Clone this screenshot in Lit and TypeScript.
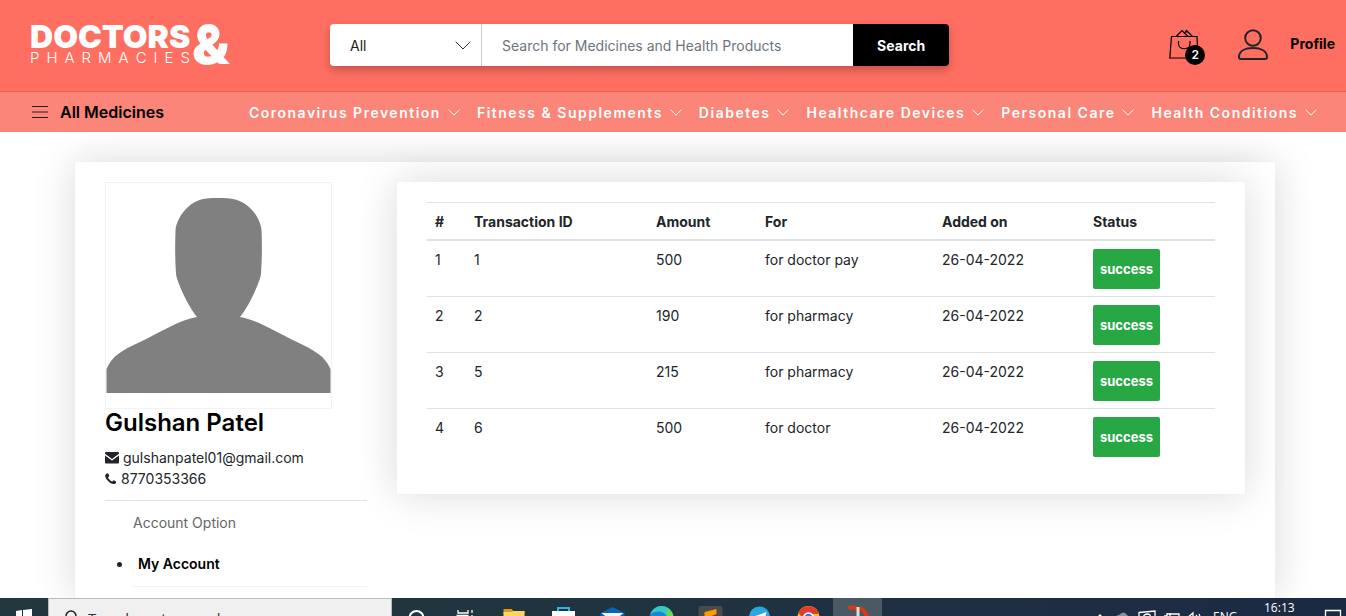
import { LitElement, html, css, svg } from "lit";
import { customElement } from "lit/decorators.js";

const chevron = html`<svg class="chevron" viewBox="0 0 16 9" fill="none" stroke="currentColor" aria-hidden="true"><path d="M.7.7 8 8 15.300.7" /></svg>`;

@customElement("site-header")
class SiteHeader extends LitElement {
  static styles = css`
    :host { display: block; position: relative; z-index: 1; color: #000; }
    a { color: inherit; text-decoration: none; }
    .top { display: flex; align-items: center; height: 90px; padding: 0 11px 1px 30px; background: #ff6f61; border-bottom: 1px solid #e46257; }
    .logo { display: flex; align-items: center; width: 300px; flex: none; color: #fff; font-family: Inter, sans-serif; }
    .words { display: flex; flex-direction: column; width: 162px; }
    .doctors { font-size: 32px; line-height: 26px; font-weight: 900; }
    .pharmacies { display: flex; justify-content: space-between; width: 160px; font-size: 15px; line-height: 16px; font-weight: 300; }
    .amp { font-size: 54px; line-height: 42px; font-weight: 900; }
    .search { display: flex; flex: none; width: 46vw; height: 42px; border-radius: 4px; overflow: hidden; box-shadow: 0 4px 8px rgba(0, 0, 0, .25); }
    .pick { display: flex; align-items: center; width: 151px; background: #fff; border-right: 1px solid #ccc; }
    .pick select { appearance: none; width: 100%; height: 100%; margin-right: -36px; padding: 0 36px 0 20px; border: 0; background: none; font: 14px Inter, sans-serif; color: #222; }
    .pick .chevron { width: 16px; height: 9px; flex: none; margin: 0 10px; color: #333; pointer-events: none; }
    .search input { flex: 1; min-width: 0; border: 0; padding: 0 20px; font: 14px Inter, sans-serif; color: #222; outline: none; }
    .search input::placeholder { color: #6c757d; }
    .search button { width: 96px; border: 0; background: #000; color: #fff; font: 700 14px Inter, sans-serif; }
    .tools { display: flex; align-items: center; margin-left: auto; }
    .cart { position: relative; width: 36px; height: 36px; margin: 3px 33px 0 0; }
    .cart svg { display: block; }
    .count { position: absolute; right: 0; bottom: 0; width: 20px; height: 20px; border-radius: 50%; background: #000; color: #fff; font-size: 12px; line-height: 20px; font-weight: 600; text-align: center; }
    .user { display: block; margin-right: 22px; }
    .user svg { display: block; }
    .profile { font-size: 14px; font-weight: 700; margin-bottom: 4px; }
    .menu { display: flex; align-items: center; height: 40px; padding: 0 29px 0 32px; background: #fa8578; }
    .all { display: flex; align-items: center; gap: 12px; border: 0; padding: 0; background: none; font: 600 16px Inter, sans-serif; color: #000; white-space: nowrap; }
    nav { display: flex; gap: 17px; margin-left: auto; color: #fff; font-size: 14px; font-weight: 600; letter-spacing: 1.5px; white-space: nowrap; }
    nav a { display: flex; align-items: center; gap: 7px; }
    nav .chevron { width: 12px; height: 7px; stroke-width: 1.300; }
  `;
  render() {
    const items = ["Coronavirus Prevention", "Fitness & Supplements", "Diabetes", "Healthcare Devices", "Personal Care", "Health Conditions"];
    return html`
      <div class="top">
        <a class="logo" href="#">
          <span class="words"><span class="doctors">DOCTORS</span>
            <span class="pharmacies">${[..."PHARMACIES"].map((c) => html`<span>${c}</span>`)}</span></span>
          <span class="amp">&amp;</span>
        </a>
        <form class="search" @submit=${(e: Event) => e.preventDefault()}>
          <div class="pick"><select aria-label="Category"><option>All</option></select>${chevron}</div>
          <input type="text" aria-label="Search" placeholder="Search for Medicines and Health Products" />
          <button>Search</button>
        </form>
        <div class="tools">
          <a class="cart" href="#" aria-label="Cart">
            <svg width="30" height="32" viewBox="0 0 30 32" fill="none" stroke="#000" stroke-width="1.2"><path d="M2.500 7.500h25.500l1 21.500H.8zM7 7.500l6-6 6 6M15.500 4l2-2.500 6 6M16 2.800h3M9.500 12v2.500c0 7 11.500 7 11.500 0V12" /></svg>
            <span class="count">2</span>
          </a>
          <a class="user" href="#" aria-label="Account">
            <svg width="30" height="32" viewBox="0 0 30 32" fill="none" stroke="#212529" stroke-width="2"><circle cx="15" cy="9" r="7.800" /><path d="M1 28c0-6 6-9 14-9s14 3 14 9c0 1.500-.5 2-2 2H3c-1.500 0-2-.5-2-2z" /></svg>
          </a>
          <a class="profile" href="#">Profile</a>
        </div>
      </div>
      <div class="menu">
        <button class="all"><svg width="16" height="12" viewBox="0 0 16 12" stroke="#222"><path d="M0 .5h16M0 6h16M0 11.500h16" /></svg>All Medicines</button>
        <nav>${items.map((t) => html`<a href="#">${t}${chevron}</a>`)}</nav>
      </div>`;
  }
}

@customElement("profile-panel")
class ProfilePanel extends LitElement {
  static styles = css`
    :host { display: block; font-size: 14px; line-height: 21px; }
    .photo { display: block; width: 225px; height: 225px; border: 1px solid #f2f2f2; }
    h1 { margin: 0 0 10px; font-size: 24px; line-height: 28px; font-weight: 600; color: #000; }
    .line { display: flex; align-items: center; gap: 4px; }
    .rule { height: 1px; margin: 11px 0; background: #e2e2e2; }
    .title { margin: 0 0 20px 28px; color: #666; }
    ul { margin: 0 0 0 28px; padding: 0; }
    li { padding: 0 0 12px 5px; border-bottom: 1px solid #f2f2f2; }
    li a { color: #000; font-weight: 600; text-decoration: none; }
  `;
  render() {
    return html`
      <svg class="photo" viewBox="0 0 225 225" role="img" aria-label="Profile photo"><path fill="#808080" d="M112 15C126 15 134 16 143 24C151 31 155 41 155.500 47C156.200 62 156 77 155 91C154 99 143 123 134 134C152 137 170 149 191 159C208 167 219 173 224.500 186V210H.5V186C6 173 16 167 34 159C55 149 73 137 91 134C82 123 71 99 70 91C69 77 69 62 69.500 47C70 41 74 31 82 24C91 16 98 15 112 15Z" /></svg>
      <h1>Gulshan Patel</h1>
      <div class="line"><svg width="14" height="12" viewBox="0 0 14 12" fill="#212529"><path d="M1 0h12q1 0 1 1v.8L7 7 0 1.800V1Q0 0 1 0zM0 3.500 7 8.600l7-5.100V10.500q0 1-1 1H1q-1 0-1-1z" /></svg>gulshanpatel01@gmail.com</div>
      <div class="line"><svg width="12" height="12" viewBox="0 0 12 12" fill="#212529"><path d="M2.800.2c.5 0 1.500 2.300 1.500 2.800 0 .7-1.300 1-1.300 1.600C3 5.300 6 8.600 7.100 8.600c.6 0 1-1.300 1.600-1.300.5 0 2.500 1.200 2.500 1.600 0 1.100-.9 2.200-2.400 2.200C5 11.100.2 6 .2 2.800.2 1.200 1.700.2 2.800.2z" /></svg>8770353366</div>
      <div class="rule"></div>
      <p class="title">Account Option</p>
      <ul><li><a href="#">My Account</a></li></ul>`;
  }
}

@customElement("transaction-table")
class TransactionTable extends LitElement {
  static styles = css`
    :host { display: block; padding: 20px 30px 30px; background: #fff; box-shadow: 0 0 40px rgba(0, 0, 0, .15); font-size: 14px; line-height: 21px; }
    table { width: 100%; table-layout: fixed; border-collapse: separate; border-spacing: 0; }
    th { padding: 8px 8px 7px; text-align: left; font-size: 14px; font-weight: 700; border-top: 1px solid #dee2e6; border-bottom: 2px solid #dee2e6; }
    td { padding: 8px 8px 7px; vertical-align: top; border-top: 1px solid #dee2e6; }
    tbody tr:first-child td { border-top: 0; }
    .c1 { width: 39px; } .c2 { width: 182px; } .c3 { width: 109px; } .c4 { width: 177px; } .c5 { width: 151px; } .c6 { width: 130px; }
    .badge { display: block; width: 67px; border-radius: 2px; background: #28a745; color: #fff; font-size: 13px; line-height: 40px; font-weight: 700; text-align: center; }
  `;
  rows = [
    ["1", "1", "500", "for doctor pay"],
    ["2", "2", "190", "for pharmacy"],
    ["3", "5", "215", "for pharmacy"],
    ["4", "6", "500", "for doctor"],
  ];
  render() {
    return html`<table>
      <colgroup><col class="c1" /><col class="c2" /><col class="c3" /><col class="c4" /><col class="c5" /><col class="c6" /></colgroup>
      <thead><tr>${["#", "Transaction ID", "Amount", "For", "Added on", "Status"].map((h) => html`<th scope="col">${h}</th>`)}</tr></thead>
      <tbody>${this.rows.map((r) => html`<tr>${r.map((c) => html`<td>${c}</td>`)}<td>26-04-2022</td><td><span class="badge">success</span></td></tr>`)}</tbody>
    </table>`;
  }
}

@customElement("task-bar")
class TaskBar extends LitElement {
  static styles = css`
    :host { display: flex; align-items: flex-start; height: 18px; overflow: hidden; background: linear-gradient(90deg, #21383f, #20343f 45%, #1b2a44); color: #fff; font: 12px/16px "Open Sans", sans-serif; }
    svg { display: block; flex: none; }
    .find { display: flex; width: 342px; height: 40px; border: 1px solid #bbb; background: #f0f0f0; color: #333; }
    .find svg { margin: 10px 11px 0 15px; }
    .find input { flex: 1; min-width: 0; height: 38px; padding: 0; border: 0; background: none; font: 15px "Open Sans", sans-serif; outline: none; }
    .find input::placeholder { color: #333; }
    .active { background: #4a5963; }
    .tray { display: flex; align-items: flex-start; margin-left: auto; }
    .lang { padding: 11px 0 0 10px; width: 51px; }
    .clock { padding: 2px 0 0; width: 60px; }
  `;
  render() {
    const icons = [
      svg`<circle cx="24" cy="20" r="7" fill="none" stroke="#fff" stroke-width="2" />`,
      svg`<path fill="none" stroke="#fff" stroke-width="1.300" d="M16.500 12v3h10v-3M15 17.500h12M30.500 12v3M30.500 17v6" />`,
      svg`<path fill="#e09b10" d="M13 11h8l2 2h11v3H13z" /><path fill="#ffd561" d="M13 14h8l2-1h11v20H13z" />`,
      svg`<path fill="none" stroke="#2bb5ee" stroke-width="2" d="M18.500 15v-5h11v5" /><path fill="#fff" d="M12.500 13h23v18h-23z" />`,
      svg`<path fill="#0b62b5" d="m24 9 12 6v17H12V15z" /><path fill="#f2f6fa" d="M13 15h22l-11 9z" />`,
      svg`<circle cx="24" cy="20" r="12" fill="#1688d4" /><path fill="#35c8c4" d="M13 16c2-5 6-8 11-8 7 0 12 6 12 12-7 1-7-5-12-6-4-1-8 0-11 2z" /><path fill="#67d84f" d="M30 10q6 4 6 10h-7z" />`,
      svg`<rect x="12" y="8" width="24" height="24" rx="2" fill="#4a4a4a" /><path fill="#ff9800" d="m18 14 12-3v5l-12 5z" />`,
      svg`<circle cx="24" cy="19" r="10.500" fill="#2ca5e0" /><path fill="#fff" d="m17 19 14-5-3 12z" />`,
      svg`<circle cx="24" cy="19" r="11" fill="#fbc116" /><path fill="#e33b2e" d="M14 15c3-9 18-9 20 1H24l-5 5z" /><circle cx="24" cy="20" r="5" fill="#3b78e7" stroke="#fff" stroke-width="1.500" />`,
      svg`<path fill="none" stroke="#d83b10" stroke-width="4" d="M15 10q8-2 10 3M26 10q7 3 7 10" /><path fill="#ddd" d="M23 9h3v16h-3z" />`,
    ];
    return html`
      <svg width="48" height="40" viewBox="0 0 48 40"><path fill="#fff" d="m16 13 6-1v8h-6zm7-1 9-1v9h-9z" /></svg>
      <div class="find"><svg width="13" height="20" viewBox="0 0 13 20" fill="none" stroke="#222" stroke-width="1.500"><circle cx="7" cy="7" r="5" /><path d="m4 11-4 5" /></svg><input type="text" aria-label="Search" placeholder="Type here to search" /></div>
      ${icons.map((i, n) => html`<svg class=${n === 9 ? "active" : ""} width="49" height="40" viewBox="0 0 48 40">${i}</svg>`)}
      <div class="tray">
        <svg width="110" height="40" viewBox="0 0 110 40" fill="none" stroke="#fff" stroke-width="1.300"><path d="m3 21 4-4 4 4" /><path fill="#8a949c" stroke="none" d="M22 22q0-5 4-5 5-5 8 0 2 1 2 5z" /><path d="M46 14.500 62 13v12H46zM51 21q-2-4 3-5 4 0 3 3M71 18h3v-3m3 3v-3m-3 1h12v8H74M94 20l6-5v10M103 17q2 2 0 5m3-6q2 3 0 7" /></svg>
        <span class="lang">ENG</span><span class="clock">16:13</span>
        <svg width="22" height="40" viewBox="0 0 22 40" fill="none" stroke="#fff" stroke-width="1.300"><path d="M1.500 12.500h15v12h-15z" /></svg>
      </div>`;
  }
}

@customElement("app-root")
class AppRoot extends LitElement {
  static styles = css`
    :host { display: flex; flex-direction: column; height: 100vh; overflow: hidden; background: #fff; color: #212529; font-family: Inter, sans-serif; font-size: 14px; }
    site-header, task-bar { flex: none; }
    main { display: flex; flex: 1; min-height: 0; overflow: hidden; padding: 30px 71px 0 75px; }
    .card { display: grid; grid-template-columns: 262fr 848fr; gap: 30px; align-items: start; flex: 1; min-width: 0; padding: 20px 30px; background: #fff; box-shadow: 0 0 40px rgba(0, 0, 0, .15); }
  `;
  render() {
    return html`<site-header></site-header>
      <main><section class="card"><profile-panel></profile-panel><transaction-table></transaction-table></section></main>
      <task-bar></task-bar>`;
  }
}
